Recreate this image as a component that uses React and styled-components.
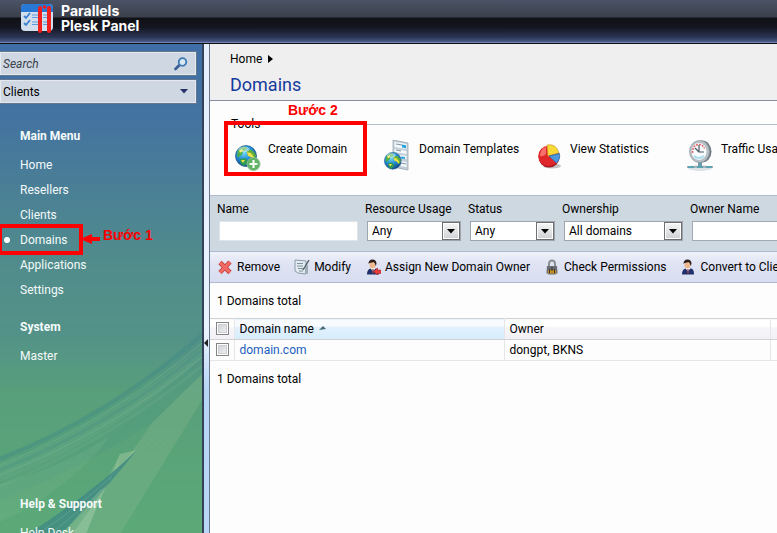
import React from "react";
import styled, { createGlobalStyle, css } from "styled-components";

const GlobalStyle = createGlobalStyle`
  *, *::before, *::after { box-sizing: border-box; }
  body {
    margin: 0;
    background: #fdfdfd;
    color: #000;
    font: 12px/18px Roboto, "Noto Sans", sans-serif;
  }
  button, input, select { font: inherit; color: inherit; }
`;

const Page = styled.div`
  display: grid;
  grid-template-rows: auto minmax(0, 1fr);
  height: 100vh;
  overflow: hidden;
`;

const Header = styled.header`
  display: flex;
  align-items: flex-start;
  gap: 8px;
  height: 44px;
  padding: 3px 0 0 21px;
  background: linear-gradient(#4b5366 0, #3b404c 17px, #101116 18px, #14161f 27px, #2a3352 37px, #4a5c8c 42px);
  border-bottom: 1px solid #0c0e14;
  box-shadow: inset 0 -1px 0 #7385b0;
`;

const Brand = styled.div`
  color: #fff;
  font: 700 14px/15px Inter, sans-serif;
`;

const Body = styled.div`
  display: grid;
  grid-template-columns: 204px 5px minmax(0, 1fr);
`;

const Sidebar = styled.aside`
  position: relative;
  overflow: hidden;
  padding-top: 7px;
  border-right: 2px solid #34435a;
  background: linear-gradient(#3f6da6 0, #44749f 80px, #518c8b 220px, #539288 290px, #589f7b 350px, #5ca977 490px);
`;

const Waves = styled.svg`
  position: absolute;
  left: 0;
  top: 256px;
  width: 202px;
  height: 234px;
`;

const SidebarContent = styled.div`
  position: relative;
`;

const Field = styled.div`
  display: flex;
  align-items: center;
  height: 25px;
  margin: 0 5px 3px 0;
  padding-right: 8px;
  background: #ced7e2;
  border: 1px solid #65788f;
  border-left: 0;
  box-shadow: inset 0 0 0 1px #e4e9f0;

  svg { flex: none; pointer-events: none; }
`;

const bareControl = css`
  flex: 1;
  min-width: 0;
  height: 20px;
  padding: 0 0 0 3px;
  border: 0;
  outline: 0;
  background: transparent;
  appearance: none;
`;

const SearchInput = styled.input`
  ${bareControl}
  font-style: italic;
  &::placeholder { color: #3d434a; opacity: 1; }
`;

const ScopeSelect = styled.select`
  ${bareControl}
  margin-right: -10px;
`;

const IconButton = styled.button`
  display: flex;
  padding: 0;
  border: 0;
  background: none;
`;

const Menus = styled.div`
  padding-top: 4px;
`;

const Nav = styled.nav`
  margin-top: ${(p) => (p.$far ? 127 : 16)}px;
  color: #f4fafa;
`;

const NavTitle = styled.h2`
  margin: 0 0 6px;
  padding-left: 20px;
  font-size: 12px;
  font-weight: 700;
  line-height: 19px;
`;

const NavList = styled.ul`
  margin: 0;
  padding: 0;
  list-style: none;
`;

const NavItem = styled.li`
  position: relative;
  height: 25px;
`;

const NavLink = styled.a`
  display: flex;
  align-items: center;
  height: 25px;
  padding-left: 20px;
  color: inherit;
  text-decoration: none;

  ${(p) => p.$current && css`
    &::before {
      content: "";
      width: 6px;
      height: 6px;
      margin: 0 10px 0 -16px;
      border-radius: 50%;
      background: #fff;
    }
  `}
`;

const Highlight = styled.div`
  position: absolute;
  border: 4px solid #fe0000;
  pointer-events: none;
  ${(p) => p.$nav
    ? css`left: -2px; top: -3px; width: 85px; height: 31px;`
    : css`left: -7px; top: -19px; width: 143px; height: 55px;`}
`;

const StepLabel = styled.div`
  position: absolute;
  display: flex;
  align-items: center;
  color: #fe0000;
  font: 700 14px/16px "Liberation Sans", Arial, sans-serif;
  white-space: nowrap;
  pointer-events: none;
  ${(p) => p.$nav ? css`left: 80px; top: -1px;` : css`left: 57px; top: -38px;`}
`;

const ArrowMark = styled.svg`
  margin: 8px 2px 0 0;
`;

const Splitter = styled.button`
  display: flex;
  align-items: center;
  padding: 108px 0 0;
  border: 0;
  background: linear-gradient(#e6efff 0, #e9f2ff 290px, #b7d5f5 345px, #b9d6f6 100%);
`;

const Main = styled.main`
  overflow: hidden;
  border-left: 1px solid #67758a;
`;

const PageHead = styled.div`
  height: 57px;
  padding: 6px 0 0 20px;
  background: #efefef;
  border-bottom: 1px solid #8b8fa5;
`;

const Crumbs = styled.nav`
  display: flex;
  align-items: center;
  gap: 6px;

  a { color: inherit; text-decoration: none; }
`;

const Title = styled.h1`
  margin: 4px 0 0;
  color: #173a9d;
  font-size: 18px;
  font-weight: 400;
  line-height: 26px;
`;

const Tools = styled.fieldset`
  min-width: 0;
  height: 80px;
  margin: 14px 0 0 14px;
  padding: 7px 0 0 7px;
  border: 0 solid #b3bfcd;
  border-top-width: 1px;

  legend { padding: 0 2px; margin-left: -2px; }
`;

const ToolRow = styled.div`
  display: grid;
  grid-template-columns: repeat(4, 151px);
`;

const ToolCell = styled.div`
  position: relative;
`;

const ToolButton = styled.button`
  display: flex;
  gap: 5px;
  padding: 0;
  border: 0;
  background: none;
  white-space: nowrap;
`;

const Filters = styled.form`
  display: grid;
  grid-template-columns: 141px 96px 87px 121px 140px;
  gap: 7px;
  height: 56px;
  padding: 4px 0 0 7px;
  background: #ced8e0;
  border-top: 1px solid #b3bbca;
`;

const FilterField = styled.label`
  display: flex;
  flex-direction: column;
  gap: 3px;
  white-space: nowrap;
`;

const FilterInput = styled.input`
  height: 20px;
  margin-left: 2px;
  min-width: 0;
  padding: 0 4px;
  border: 1px solid ${(p) => (p.$strong ? "#a3a8b4" : "#dfe4e9")};
  background: #fff;
`;

const SelectFrame = styled.span`
  display: grid;
  grid-template-columns: minmax(0, 1fr) 18px;
  align-items: center;
  height: 20px;
  margin-left: 2px;
  border: 1px solid #9fa4af;
  background: #fff;
`;

const FilterSelect = styled.select`
  grid-area: 1 / 1 / 2 / 3;
  width: 100%;
  height: 18px;
  padding: 0 18px 0 4px;
  border: 0;
  background: transparent;
  appearance: none;
`;

const SelectArrow = styled.span`
  grid-area: 1 / 2;
  display: grid;
  place-items: center;
  height: 18px;
  border: 1px solid #6d6f73;
  background: linear-gradient(#f6f6f6, #cfd1d4);
  box-shadow: inset 0 0 0 1px #fff;
  pointer-events: none;
`;

const Actions = styled.div`
  display: flex;
  align-items: center;
  gap: 14px;
  height: 32px;
  padding-left: 7px;
  background: linear-gradient(#f0f2fa, #dfe3f3 40%, #d8def0);
  border: solid #b1b8d2;
  border-width: 1px 0;
`;

const ActionButton = styled.button`
  display: flex;
  flex: none;
  align-items: center;
  gap: 4px;
  padding: 0;
  border: 0;
  background: none;
  white-space: nowrap;
`;

const Total = styled.p`
  margin: 9px 7px;
`;

const Table = styled.table`
  width: 100%;
  min-width: 600px;
  margin-top: -1px;
  table-layout: fixed;
  border-collapse: collapse;

  th, td {
    height: 21px;
    padding: 0 0 0 5px;
    border: 1px solid #e6e6e6;
    border-left: 0;
    text-align: left;
    font-weight: 400;
    line-height: 18px;
  }
  th {
    border-top-color: #d2d2d2;
    border-bottom-color: #d2d2d2;
    background: linear-gradient(#fff 35%, #f5f5fa 40%, #f3f0f5);
  }
  th[aria-sort] { background: linear-gradient(#f7faff 35%, #e3f0fd 38%, #d4eefa); }
  a { color: #1c5fbe; text-decoration: none; }
  svg { margin: 0 0 3px 5px; }
`;

const CheckColumn = styled.col`
  width: 24px;
`;

const DataColumn = styled.col`
  width: ${(p) => p.$width}px;
`;

const Check = styled.input`
  display: block;
  width: 13px;
  height: 13px;
  margin: 0 0 1px 1px;
  appearance: none;
  border: 1px solid #858585;
  background: linear-gradient(135deg, #c8cbd2, #f6f6f6);
  box-shadow: inset 0 0 0 1px #fff, inset 0 0 0 2px #cccfd4;
`;

const Globe = ({ x = 0, y = 0, s = 1 }) => (
  <g transform={`translate(${x} ${y}) scale(${s})`}>
    <circle cx="11" cy="11" r="10.5" fill="url(#sea)" stroke="#17548f" strokeWidth=".7" />
    <path d="M3 5 8 1.500l4 1-1 3-3 1-1 3-4 3-1-2Z" fill="#4fae4c" />
    <path d="M12 6q3-2 6 0l3 4-1 4-2 1-1-3-3-1q-3-2-2-5Z" fill="#5cae38" />
    <path d="M5 14l5-1 3 3-2 4-3 1-3-4Z" fill="#2f9a58" />
    <path d="m12 7 4 1 3 4-1 3-2-3-3-1ZM4 6l3-2 1 2-3 2ZM6 15l4 0-2 3Z" fill="#ebe14a" />
    <ellipse cx="9" cy="4.500" rx="5.500" ry="2.800" fill="#fff" opacity=".4" />
  </g>
);

const Defs = () => (
  <defs>
    <radialGradient id="sea" cx=".4" cy=".3" r=".75">
      <stop offset="0" stopColor="#7fe0ff" />
      <stop offset=".5" stopColor="#228fd2" />
      <stop offset="1" stopColor="#103f80" />
    </radialGradient>
  </defs>
);

const CreateIcon = () => (
  <svg width="32" height="32" aria-hidden="true">
    <Defs />
    <Globe x={4} y={5} />
    <circle cx="22.500" cy="24" r="6.500" fill="#5fb465" stroke="#8fbf93" />
    <path d="M22.500 20v8M18.500 24h8" stroke="#f2faf2" strokeWidth="2.200" />
  </svg>
);

const TemplateIcon = () => (
  <svg width="32" height="32" aria-hidden="true">
    <Defs />
    <path d="m11 0 15 3v27l-15-3Z" fill="#c3ced8" stroke="#9ba8b3" strokeWidth=".8" />
    <path d="m12.500 2 12 2v5l-12-2ZM12.500 9l12 2v3l-12-2ZM17 15l7.500 1v3L17 18ZM19 21l5.500 1v5L19 26Z" fill="#f5f9fc" />
    <path d="m14 4 6 1M14 10l5 1M19 23l5 1" stroke="#8295a7" strokeWidth="1.200" />
    <path d="m20 4.500 4 .8v3l-4-.8ZM19 16.500l4 .5v2l-4-.5Z" fill="#2ba6dc" />
    <Globe x={2} y={12} s={0.8} />
  </svg>
);

const PieIcon = () => (
  <svg width="32" height="32" aria-hidden="true">
    <ellipse cx="19" cy="26" rx="9" ry="2.500" fill="#999" opacity=".6" />
    <circle cx="16" cy="17" r="10.500" fill="#a7141b" />
    <circle cx="15.500" cy="16" r="10.200" fill="#e0262b" />
    <path d="M15 16 14 5q9-2 12 8Z" fill="#f8d936" stroke="#c9982a" strokeWidth=".7" />
    <path d="m16 16 10.500-2.500q1 6-3 9.500Z" fill="#4a98dd" stroke="#2a66a7" strokeWidth=".7" />
    <path d="M7 16q0-7 6-9v7q-3 3-6 2Z" fill="#ff8279" opacity=".8" />
  </svg>
);

const GaugeIcon = () => (
  <svg width="32" height="32" aria-hidden="true">
    <ellipse cx="16" cy="28" rx="12" ry="3" fill="#dde2e4" />
    <path d="M16 21v7" stroke="#7d939d" strokeWidth="4" />
    <path d="M3 27h26" stroke="#a3b3ba" strokeWidth="2" />
    <path d="M4 27h6M13 27h6M22 27h6M16 23v4" stroke="#5aa3b0" strokeWidth="2" />
    <ellipse cx="18" cy="11.500" rx="9.500" ry="11" fill="#727c85" />
    <ellipse cx="15.500" cy="11.500" rx="10" ry="11" fill="#b9c0c6" stroke="#8c959d" strokeWidth=".7" />
    <ellipse cx="15" cy="11.500" rx="7.500" ry="8.500" fill="#f8fbfc" />
    <path d="M8.500 13q0-8.500 7-8.500 3 0 5 4" fill="none" stroke="#de6c6c" strokeWidth="1.600" strokeDasharray="2 1" />
    <path d="M15 5v7h5M11 8l4 4" fill="none" stroke="#4c5864" strokeWidth="1.200" />
    <path d="M10 16q5 4 10 0" stroke="#a9dcee" strokeWidth="2" fill="none" />
  </svg>
);

const Person = () => (
  <>
    <path d="M2 15.500q0-5.500 4-6h5q3 .5 3 6Z" fill="#20306a" />
    <path d="m5.500 9 2.500 4 2.500-4Z" fill="#fff" />
    <path d="m7.500 10 1 0 .5 4-1 1-1-1Z" fill="#7a3b53" />
    <ellipse cx="7.500" cy="5.500" rx="3" ry="4" fill="#efb78e" />
    <path d="M3.500 5Q3.500.5 7.500.5q4 0 4 4.500l-1 2q0-3-2-4-3 1-4 1Z" fill="#2b1d1b" />
  </>
);

const actionIcons = {
  remove: (
    <>
      <path d="m3 3.500 10 10M13 3 3 13.500" stroke="#c2403f" strokeWidth="4.600" />
      <path d="m3 3.500 10 10M13 3 3 13.500" stroke="#f26a64" strokeWidth="3" />
    </>
  ),
  modify: (
    <>
      <path d="m1 1 11 1v13l-8-1-3-2Z" fill="#e3ebf0" stroke="#8a9ba8" />
      <path d="M3 4.500h6M3 7h6M4 9.500h5M5 12h4" stroke="#7d909e" />
      <path d="m15 1-6 10" stroke="#4e5d68" strokeWidth="1.400" />
      <path d="m11 9 3-4v10l-3-1Z" fill="#9cabb6" />
    </>
  ),
  assign: (
    <>
      <Person />
      <path d="m8.500 12.500 4-3.500v2H16v3.500h-3.500V16Z" fill="#ea3d39" stroke="#ad1f21" strokeWidth=".5" />
    </>
  ),
  lock: (
    <>
      <path d="M5 8V5q0-3.500 3-3.500T11 5v3" fill="none" stroke="#8b9094" strokeWidth="2" />
      <path d="M3 7h10l.5 7-2 1.500h-7L2.500 14Z" fill="#6b6f75" />
      <path d="M4 11h8v3.500H4Z" fill="#c48d25" />
      <path d="M8 8v4M5.500 10v4M10.500 10v4" stroke="#38342c" />
    </>
  ),
  convert: <Person />,
};

const ActionIcon = ({ name }) => (
  <svg width="16" height="16" aria-hidden="true">{actionIcons[name]}</svg>
);

const Logo = () => (
  <svg width="32" height="31" viewBox="0 0 32 31" aria-hidden="true">
    <rect x="0" y="1" width="32" height="27" rx="4" fill="#d3deec" />
    <path d="M0 9V5q0-4 4-4h24q4 0 4 4v4Z" fill="#2879d5" />
    <path d="m3 13 2 2 4-5M3 20l2 2 4-5" fill="none" stroke="#3b82ce" strokeWidth="1.800" />
    <path d="M11 12h6M11 14.500h6M11 19h6M11 21.500h6M22 12h4M22 14.500h4M22 19h4M22 21.500h4" stroke="#5b9add" />
    <path d="M19 5v23M28 5v23" stroke="#f0201f" strokeWidth="4" strokeLinecap="round" />
    <circle cx="23.500" cy="4" r="1.800" fill="#f0201f" />
  </svg>
);

const WaveArt = () => (
  <Waves viewBox="0 0 202 234" preserveAspectRatio="none" aria-hidden="true">
    <path d="M202 74 153 122 130 154 65 234H120L202 100Z" fill="#7fb48c" opacity=".4" />
    <path d="M0 156Q110 118 202 30V74L153 122Q80 170 0 200Z" fill="#45908a" opacity=".16" />
    <path d="M0 166Q110 122 202 46V58Q110 140 0 182Z" fill="#6fb088" opacity=".25" />
    <path d="M0 184Q60 168 110 136Q70 190 0 222Z" fill="#78b98a" opacity=".25" />
    <g fill="none">
      <path d="M0 159Q110 115 202 35" stroke="#3e8687" strokeWidth="4" opacity=".35" />
      <path d="M0 165Q110 121 202 43" stroke="#7fb69a" strokeWidth="1" opacity=".5" />
      <path d="M0 170Q110 127 202 50" stroke="#3e8687" strokeWidth="3" opacity=".25" />
      <path d="M0 175Q110 133 202 57" stroke="#7fb69a" strokeWidth="1" opacity=".45" />
      <path d="M0 186Q110 140 202 66" stroke="#83bd92" strokeWidth="3" opacity=".15" />
    </g>
    <path d="M120 154 137 150 112 174Z" fill="#8bbd91" opacity=".7" />
    <path d="M120 154 106 182 118 172Z" fill="#8bbd91" opacity=".5" />
    <path d="M137 150Q96 190 28 234H60Q92 206 137 150Z" fill="#3f8983" opacity=".8" />
    <path d="M106 187 72 234H86Q96 208 106 187Z" fill="#9bc9a3" opacity=".6" />
    <path d="M100 190 62 234H72L106 187Z" fill="#7db792" opacity=".5" />
    <path d="M112 176Q80 206 38 234M108 184Q84 208 50 234" stroke="#78ad9b" fill="none" opacity=".5" />
  </Waves>
);

const DownCaret = ({ color = "#000" }) => (
  <svg width="8" height="5" aria-hidden="true"><path d="M0 0h8L4 4.500Z" fill={color} /></svg>
);

const Step = ({ nav, children }) => (
  <>
    <Highlight $nav={nav} />
    <StepLabel $nav={nav}>
      {nav && (
        <ArrowMark width="21" height="10" aria-hidden="true">
          <path d="M0 5 12 0v3h8v4h-8v3Z" fill="#fe0000" />
        </ArrowMark>
      )}
      {children}
    </StepLabel>
  </>
);

const Menu = ({ title, items, far }) => (
  <Nav $far={far} aria-label={title}>
    <NavTitle>{title}</NavTitle>
    <NavList>
      {items.map((item) => {
        const current = item === "Domains";
        return (
          <NavItem key={item}>
            <NavLink href="#" $current={current} aria-current={current ? "page" : undefined}>{item}</NavLink>
            {current && <Step nav>Bước 1</Step>}
          </NavItem>
        );
      })}
    </NavList>
  </Nav>
);

const SelectField = ({ label, value }) => (
  <FilterField>
    {label}
    <SelectFrame>
      <FilterSelect defaultValue={value}><option>{value}</option></FilterSelect>
      <SelectArrow><DownCaret /></SelectArrow>
    </SelectFrame>
  </FilterField>
);

const tools = [
  ["Create Domain", CreateIcon],
  ["Domain Templates", TemplateIcon],
  ["View Statistics", PieIcon],
  ["Traffic Usage", GaugeIcon],
];

const actions = [
  ["remove", "Remove"],
  ["modify", "Modify"],
  ["assign", "Assign New Domain Owner"],
  ["lock", "Check Permissions"],
  ["convert", "Convert to Client"],
];

export default function App() {
  return (
    <Page>
      <GlobalStyle />
      <Header>
        <Logo />
        <Brand>Parallels<br />Plesk Panel</Brand>
      </Header>
      <Body>
        <Sidebar>
          <WaveArt />
          <SidebarContent>
            <Field>
              <SearchInput type="search" placeholder="Search" aria-label="Search" />
              <IconButton type="button" aria-label="Run search">
                <svg width="14" height="14" aria-hidden="true">
                  <path d="m1.500 12 4-4" stroke="#3a5c91" strokeWidth="2.600" strokeLinecap="round" />
                  <circle cx="8.500" cy="5" r="3.800" fill="#d9e8f4" stroke="#3e79b4" strokeWidth="1.800" />
                </svg>
              </IconButton>
            </Field>
            <Field>
              <ScopeSelect aria-label="Search scope"><option>Clients</option></ScopeSelect>
              <DownCaret color="#252f6c" />
            </Field>
            <Menus>
              <Menu title="Main Menu" items={["Home", "Resellers", "Clients", "Domains", "Applications", "Settings"]} />
              <Menu title="System" items={["Master"]} />
              <Menu title="Help & Support" items={["Help Desk"]} far />
            </Menus>
          </SidebarContent>
        </Sidebar>
        <Splitter type="button" aria-label="Collapse sidebar">
          <svg width="4" height="8" aria-hidden="true"><path d="M4 0v8L0 4Z" fill="#222" /></svg>
        </Splitter>
        <Main>
          <PageHead>
            <Crumbs aria-label="Breadcrumb">
              <a href="#">Home</a>
              <svg width="5" height="8" aria-hidden="true"><path d="M0 0v8l5-4Z" /></svg>
            </Crumbs>
            <Title>Domains</Title>
          </PageHead>
          <Tools>
            <legend>Tools</legend>
            <ToolRow>
              {tools.map(([label, Icon], i) => (
                <ToolCell key={label}>
                  <ToolButton type="button"><Icon />{label}</ToolButton>
                  {i === 0 && <Step>Bước 2</Step>}
                </ToolCell>
              ))}
            </ToolRow>
          </Tools>
          <Filters>
            <FilterField>Name<FilterInput type="text" /></FilterField>
            <SelectField label="Resource Usage" value="Any" />
            <SelectField label="Status" value="Any" />
            <SelectField label="Ownership" value="All domains" />
            <FilterField>Owner Name<FilterInput type="text" $strong /></FilterField>
          </Filters>
          <Actions>
            {actions.map(([icon, label]) => (
              <ActionButton key={icon} type="button"><ActionIcon name={icon} />{label}</ActionButton>
            ))}
          </Actions>
          <Total>1 Domains total</Total>
          <Table>
            <colgroup>
              <CheckColumn />
              <DataColumn $width={270} />
              <DataColumn $width={266} />
              <col />
            </colgroup>
            <thead>
              <tr>
                <th><Check type="checkbox" aria-label="Select all domains" /></th>
                <th aria-sort="ascending">
                  Domain name
                  <svg width="7" height="4" aria-hidden="true"><path d="M0 4 4 0l3 3Z" fill="#486b7c" /></svg>
                </th>
                <th>Owner</th>
                <th aria-label="More" />
              </tr>
            </thead>
            <tbody>
              <tr>
                <td><Check type="checkbox" aria-label="Select domain.com" /></td>
                <td><a href="#">domain.com</a></td>
                <td>dongpt, BKNS</td>
                <td />
              </tr>
            </tbody>
          </Table>
          <Total>1 Domains total</Total>
        </Main>
      </Body>
    </Page>
  );
}
